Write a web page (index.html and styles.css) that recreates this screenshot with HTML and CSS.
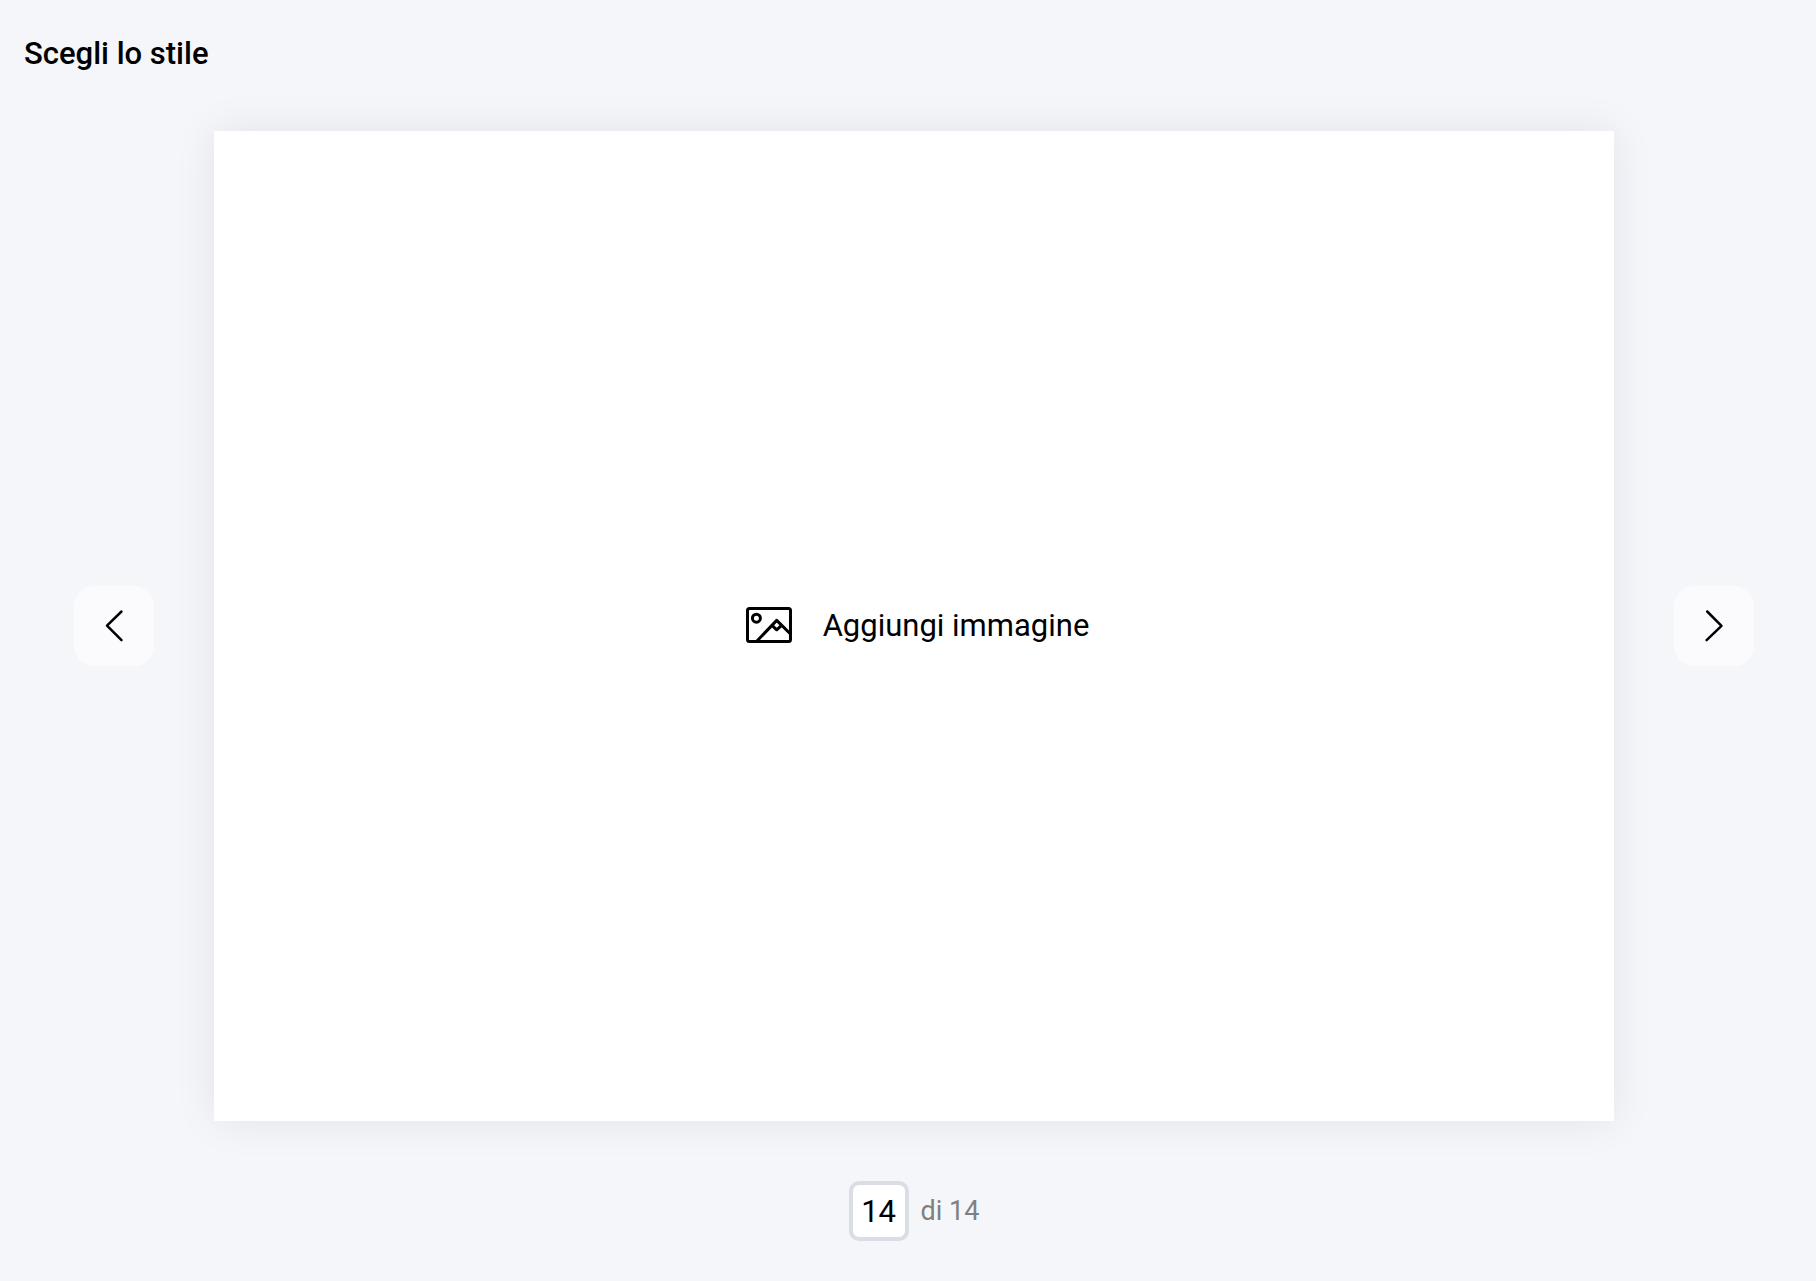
FILE: index.html
```html
<!DOCTYPE html>
<html lang="it">
<head>
  <meta charset="UTF-8">
  <meta name="viewport" content="width=device-width, initial-scale=1.0">
  <title>Scegli lo stile</title>
  <link rel="stylesheet" href="styles.css">
</head>
<body>
<header class="page-header">
  <h1>Scegli lo stile</h1>
</header>
<main>
  <div class="viewer">
    <button type="button" class="btn-nav" aria-label="Pagina precedente">
      <svg viewBox="0 0 80 80"><path d="M47.5 25.5 33 39.7 47.5 54.1"/></svg>
    </button>
    <div class="sheet">
      <button type="button" class="btn-add">
        <svg viewBox="0 0 60 60">
          <rect x="8.5" y="12.5" width="43" height="33" rx="2"/>
          <circle cx="17.4" cy="22.2" r="4"/>
          <path d="M18 45 37.7 24.4 51.5 38M33 29.4 37.7 33.8 42.5 29.4"/>
        </svg>
        <span>Aggiungi immagine</span>
      </button>
    </div>
    <button type="button" class="btn-nav" aria-label="Pagina successiva">
      <svg viewBox="0 0 80 80"><path d="M33.2 25.5 47.5 39.9 32.6 54.1"/></svg>
    </button>
  </div>
  <form class="pager">
    <input type="text" id="page" value="14" inputmode="numeric" aria-label="Pagina">
    <label for="page">di 14</label>
  </form>
</main>
</body>
</html>
```

FILE: styles.css
```css
* {
  box-sizing: border-box;
}
body {
  font-family: Roboto, sans-serif;
  background-color: #f4f6fa;
  margin: 0;
  color: #000;
}
.page-header {
  padding: 34px 24px 0;
}
h1 {
  margin: 0;
  font-size: 31px;
  line-height: 40px;
  font-weight: 500;
}
main {
  padding: 57px 62px 40px 74px;
}
.viewer {
  display: flex;
  align-items: center;
  gap: 60px;
}
button {
  border: 0;
  padding: 0;
  color: inherit;
  font-family: inherit;
  cursor: pointer;
}
svg {
  display: block;
  fill: none;
  stroke: currentColor;
  stroke-linejoin: round;
}
.btn-nav {
  flex: none;
  width: 80px;
  height: 80px;
  border-radius: 20px;
  background-color: #fbfbfd;
}
.btn-nav svg {
  stroke-width: 2.5;
  stroke-linecap: round;
}
.sheet {
  flex: 1;
  aspect-ratio: 140 / 99;
  display: flex;
  align-items: center;
  justify-content: center;
  background-color: #fff;
  box-shadow: 0 0 40px rgba(20, 20, 50, 0.08);
}
.btn-add {
  display: flex;
  align-items: center;
  gap: 24px;
  background: none;
  font-size: 31px;
  line-height: 40px;
}
.btn-add svg {
  width: 60px;
  height: 60px;
  stroke-width: 3;
}
.pager {
  display: flex;
  align-items: center;
  justify-content: center;
  gap: 12px;
  margin-top: 60px;
}
.pager input {
  width: 60px;
  height: 60px;
  padding: 0;
  border: 4px solid #dadce6;
  border-radius: 10px;
  background-color: #fff;
  color: #000;
  font-family: inherit;
  font-size: 31px;
  text-align: center;
}
.pager label {
  color: #808080;
  font-size: 27px;
  line-height: 40px;
}
```
